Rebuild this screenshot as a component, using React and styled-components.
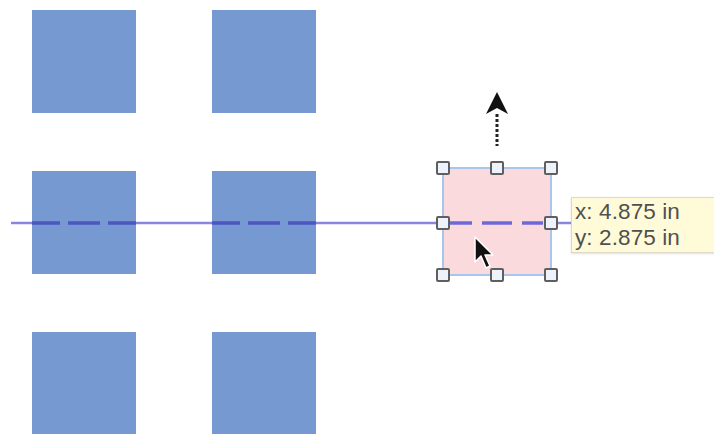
import React from "react";
import styled, { createGlobalStyle } from "styled-components";

const GlobalStyle = createGlobalStyle`
  html, body {
    margin: 0;
    padding: 0;
    background: #ffffff;
  }
`;

const Canvas = styled.div`
  position: relative;
  width: 714px;
  height: 434px;
  overflow: hidden;
  background: #ffffff;
  font-family: "Liberation Sans", Arial, sans-serif;
`;

const ShapeGrid = styled.div`
  display: grid;
  grid-template-columns: repeat(2, 104px);
  grid-auto-rows: 103px;
  column-gap: 76px;
  row-gap: 58px;
  padding: 10px 0 0 32px;
`;

const Shape = styled.div`
  background: #7699d1;
`;

const Overlay = styled.svg`
  position: absolute;
  left: 0;
  top: 0;
  pointer-events: none;
`;

const Selected = styled.div`
  position: absolute;
  left: 442px;
  top: 167px;
  width: 106px;
  height: 105px;
  background: #fadadd;
  border: 2px solid #a6c6ef;
`;

const Handle = styled.div`
  position: absolute;
  left: ${({ x }) => x - 7}px;
  top: ${({ y }) => y - 7}px;
  width: 10px;
  height: 10px;
  border: 2px solid #5f5f5f;
  border-radius: 2px;
  background: #eef3fb;
`;

const Tooltip = styled.div`
  position: absolute;
  left: 571px;
  top: 197px;
  width: 136px;
  height: 52px;
  padding: 1px 3px;
  background: #fffbd8;
  border: 1px solid #dcdac6;
  box-shadow: 0 1px 2px rgba(0, 0, 0, 0.12);
  color: #505050;
  font-size: 22.5px;
  line-height: 26px;
  letter-spacing: 0.1px;
`;

const handles = [
  [443, 168], [497, 168], [551, 168],
  [443, 223], [551, 223],
  [443, 275], [497, 275], [551, 275],
];

const thin = [[11, 32], [136, 212], [316, 443], [551, 572]];
const darkDashes = [[32, 60], [68, 100], [108, 136], [212, 240], [248, 280], [288, 316]];
const pinkDashes = [[450, 472], [482, 512], [522, 543]];

export default function App() {
  return (
    <>
      <GlobalStyle />
      <Canvas>
        <ShapeGrid>
          {Array.from({ length: 6 }).map((_, i) => (
            <Shape key={i} />
          ))}
        </ShapeGrid>
        <Selected />
        <Overlay width="714" height="434">
          {thin.map(([a, b]) => (
            <line key={a} x1={a} x2={b} y1="223" y2="223" stroke="#8a86de" strokeWidth="2.5" />
          ))}
          {darkDashes.map(([a, b]) => (
            <line key={a} x1={a} x2={b} y1="223" y2="223" stroke="#4d55c2" strokeWidth="3.5" />
          ))}
          {pinkDashes.map(([a, b]) => (
            <line key={a} x1={a} x2={b} y1="223" y2="223" stroke="#6d68d9" strokeWidth="3.5" />
          ))}
          <line x1="497" x2="497" y1="114" y2="146" stroke="#222" strokeWidth="3" strokeDasharray="3 2" />
          <path d="M497 92 L508 114 L497 108 L486 114 Z" fill="#111" />
        </Overlay>
        {handles.map(([x, y]) => (
          <Handle key={`${x}-${y}`} x={x} y={y} />
        ))}
        <Overlay width="714" height="434">
          <path
            d="M475 237 L475 262 L481 256 L486 268 L490 266 L485 255 L493 255 Z"
            fill="#111"
            stroke="#fff"
            strokeWidth="1.5"
            strokeLinejoin="round"
          />
        </Overlay>
        <Tooltip>
          <div>x: 4.875 in</div>
          <div>y: 2.875 in</div>
        </Tooltip>
      </Canvas>
    </>
  );
}
